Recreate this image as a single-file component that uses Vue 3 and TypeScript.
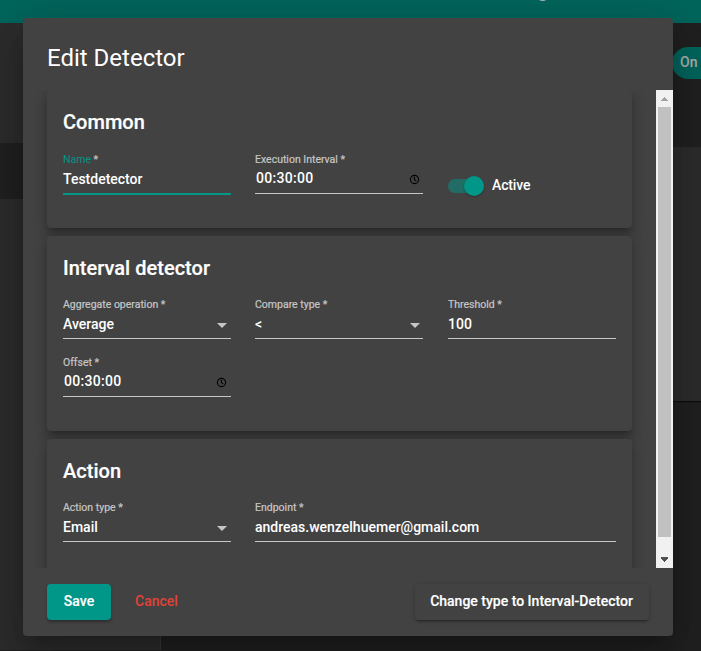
<script setup lang="ts">
import { ref } from 'vue'

interface Field {
  id: string
  label: string
  value: string
  kind: 'text' | 'time' | 'select'
  focused?: boolean
  wide?: boolean
}

interface Section {
  id: string
  title: string
  fields: Field[]
  toggle?: string
}

const sections: Section[] = [
  {
    id: 'common',
    title: 'Common',
    fields: [
      { id: 'name', label: 'Name', value: 'Testdetector', kind: 'text', focused: true },
      { id: 'execution', label: 'Execution Interval', value: '00:30:00', kind: 'time' },
    ],
    toggle: 'Active',
  },
  {
    id: 'interval',
    title: 'Interval detector',
    fields: [
      { id: 'aggregate', label: 'Aggregate operation', value: 'Average', kind: 'select' },
      { id: 'compare', label: 'Compare type', value: '<', kind: 'select' },
      { id: 'threshold', label: 'Threshold', value: '100', kind: 'text' },
      { id: 'offset', label: 'Offset', value: '00:30:00', kind: 'time' },
    ],
  },
  {
    id: 'action',
    title: 'Action',
    fields: [
      { id: 'type', label: 'Action type', value: 'Email', kind: 'select' },
      { id: 'endpoint', label: 'Endpoint', value: 'andreas.wenzelhuemer@gmail.com', kind: 'text', wide: true },
    ],
  },
]

const active = ref(true)
</script>

<template>
  <div class="screen">
    <div class="page">
      <header class="toolbar"><span class="toolbar-title">g</span></header>
      <div class="body">
        <nav class="sidenav"><div class="nav-selected"></div></nav>
        <main class="main">
          <div class="chip-row"><span class="chip">On</span></div>
          <div class="panel"></div>
        </main>
      </div>
    </div>

    <div class="backdrop">
      <div class="dialog">
        <h1 class="dialog-title">Edit Detector</h1>
        <div class="content">
          <div class="cards">
            <section v-for="s in sections" :key="s.id" class="card" :class="s.id">
              <h2 class="card-title">{{ s.title }}</h2>
              <div class="grid">
                <div
                  v-for="f in s.fields"
                  :key="f.id"
                  class="field"
                  :class="[f.kind, { focused: f.focused, wide: f.wide }]"
                >
                  <label class="label"><span class="label-text">{{ f.label }}</span> *</label>
                  <div class="control">
                    <span class="value">{{ f.value }}</span>
                    <svg v-if="f.kind === 'time'" class="clock" viewBox="0 0 11 11">
                      <circle cx="5.5" cy="5.5" r="4.1" />
                      <path d="M5.4 2.8v2.9l1.9 1.2" />
                    </svg>
                    <svg v-if="f.kind === 'select'" class="arrow" viewBox="0 0 10 5">
                      <path d="M0 0h10L5 5z" />
                    </svg>
                  </div>
                </div>
                <div v-if="s.toggle" class="toggle" @click="active = !active">
                  <span class="track" :class="{ on: active }"><span class="thumb"></span></span>
                  <span class="toggle-label">{{ s.toggle }}</span>
                </div>
              </div>
            </section>
          </div>
          <div class="scrollbar">
            <svg class="sb-btn up" viewBox="0 0 17 17"><path d="M5 11h7v-1h-1v-1h-1v-1h-1v-1h-1v1h-1v1h-1v1h-1z" /></svg>
            <div class="sb-thumb"></div>
            <svg class="sb-btn down" viewBox="0 0 17 17"><path d="M5 6h7v2h-1v1h-1v1h-1v1h-1v-1h-1v-1h-1v-1h-1z" /></svg>
          </div>
        </div>
        <div class="actions">
          <button class="btn save">Save</button>
          <button class="btn cancel">Cancel</button>
          <button class="btn change">Change type to Interval-Detector</button>
        </div>
      </div>
    </div>
  </div>
</template>

<style>
body {
  margin: 0;
  overflow: hidden;
}
</style>

<style scoped>
.screen {
  position: relative;
  width: 701px;
  height: 651px;
  overflow: hidden;
  font-family: Roboto, sans-serif;
  font-size: 14px;
  font-weight: 500;
  color: #fff;
  background: #303030;
}
.screen * {
  box-sizing: border-box;
}
.page {
  height: 650px;
  display: flex;
  flex-direction: column;
}
.toolbar {
  height: 23px;
  flex: none;
  background: #009688;
  padding-left: 537px;
  overflow: hidden;
}
.toolbar-title {
  display: block;
  font-size: 20px;
  line-height: 24px;
  margin-top: -22px;
}
.body {
  flex: 1;
  display: flex;
}
.sidenav {
  width: 161px;
  flex: none;
  background: #424242;
  border-right: 1px solid #525252;
  padding-top: 120px;
}
.nav-selected {
  height: 56px;
  background: #303030;
}
.main {
  flex: 1;
  min-width: 0;
  overflow: hidden;
  background: #303030;
}
.chip-row {
  display: flex;
  justify-content: flex-end;
  height: 124px;
  padding-top: 24px;
}
.chip {
  width: 60px;
  flex: none;
  height: 32px;
  margin-right: -31px;
  border-radius: 16px;
  background: #009688;
  padding-left: 8px;
  line-height: 31px;
}
.panel {
  height: 254px;
  background: #424242;
  box-shadow: 0 1px 1px rgba(0, 0, 0, 0.6);
}
.backdrop {
  position: absolute;
  inset: 0;
  background: rgba(0, 0, 0, 0.32);
  padding: 18px 28px 15px 23px;
}
.dialog {
  width: 650px;
  height: 618px;
  border-radius: 4px;
  background: #424242;
  padding: 24px 0 16px 24px;
  display: flex;
  flex-direction: column;
  box-shadow: 0 11px 15px -7px rgba(0, 0, 0, 0.2), 0 24px 38px 3px rgba(0, 0, 0, 0.14),
    0 9px 46px 8px rgba(0, 0, 0, 0.12);
}
.dialog-title {
  margin: 0 0 16px;
  height: 32px;
  line-height: 32px;
  font-size: 24px;
  font-weight: 400;
}
.content {
  height: 478px;
  margin-left: -24px;
  overflow: hidden;
  display: flex;
  justify-content: space-between;
}
.cards {
  width: 609px;
  padding-left: 24px;
  display: flex;
  flex-direction: column;
  gap: 8px;
}
.card {
  flex: none;
  border-radius: 4px;
  background: #424242;
  padding: 16px;
  box-shadow: 0 5px 5px -3px rgba(0, 0, 0, 0.2), 0 8px 10px 1px rgba(0, 0, 0, 0.14),
    0 3px 14px 2px rgba(0, 0, 0, 0.12);
}
.card.common {
  height: 138px;
}
.card.interval {
  height: 195px;
}
.card.action {
  height: 160px;
}
.card-title {
  margin: 0 0 13px;
  font-size: 20px;
  line-height: 32px;
  font-weight: 500;
  letter-spacing: 0.02px;
  -webkit-text-stroke: 0.2px currentColor;
}
.common .card-title {
  margin-bottom: 14px;
}
.grid {
  display: grid;
  grid-template-columns: 192px 193px 168px;
  row-gap: 16px;
}
.field {
  width: 168px;
  height: 42px;
  border-bottom: 1px solid #c6c6c6;
}
.field.wide {
  grid-column: span 2;
  width: auto;
}
.common .field.focused {
  height: 43px;
  border-bottom: 2px solid #009688;
}
.label {
  display: block;
  height: 16px;
  line-height: 16px;
  font-size: 10.5px;
  font-weight: 400;
  color: #c6c6c6;
  white-space: nowrap;
  -webkit-text-stroke: 0.2px currentColor;
}
.focused .label-text {
  color: #009688;
  -webkit-text-stroke: 0;
}
.control {
  height: 22px;
  display: flex;
  align-items: center;
  justify-content: space-between;
}
.time .control {
  height: 20px;
  padding-left: 1px;
}
.time .value {
  letter-spacing: 0.3px;
}
.clock {
  width: 11px;
  height: 11px;
  margin: 3px 4px 0 0;
  fill: none;
  stroke: #000;
  stroke-width: 1.1;
}
.arrow {
  width: 10px;
  height: 5px;
  margin: 3px 4px 0 0;
  fill: #c6c6c6;
}
.field:nth-child(2) .clock,
.field:nth-child(2) .arrow {
  margin-right: 3px;
}
.toggle {
  display: flex;
  align-items: center;
  height: 24px;
  margin-top: 21px;
}
.track {
  width: 36px;
  height: 14px;
  margin-top: 2px;
  border-radius: 7px;
  background: #6a6a6a;
  display: flex;
  align-items: center;
}
.track.on {
  background: #216d66;
  justify-content: flex-end;
}
.thumb {
  width: 20px;
  height: 20px;
  flex: none;
  border-radius: 50%;
  background: #009688;
  box-shadow: 0 1px 2px rgba(0, 0, 0, 0.3);
}
.toggle-label {
  margin-left: 8px;
  letter-spacing: -0.15px;
}
.scrollbar {
  width: 17px;
  background: #f1f1f1;
  display: flex;
  flex-direction: column;
}
.sb-btn {
  width: 17px;
  height: 17px;
  flex: none;
}
.up {
  fill: #a3a3a3;
}
.down {
  fill: #505050;
  margin-top: auto;
}
.sb-thumb {
  width: 13px;
  height: 430px;
  margin-left: 2px;
  background: #c1c1c1;
}
.actions {
  display: flex;
  padding: 16px 24px 0 0;
}
.btn {
  height: 36px;
  padding: 0 16px 2px;
  border: 0;
  border-radius: 4px;
  background: transparent;
  color: #fff;
  font: 500 14px Roboto, sans-serif;
  white-space: nowrap;
  -webkit-text-stroke: 0.15px currentColor;
}
.save {
  width: 64px;
  background: #009688;
  box-shadow: 0 2px 3px rgba(0, 0, 0, 0.32);
}
.cancel {
  margin-left: 8px;
  color: #e04238;
  -webkit-text-stroke: 0;
}
.change {
  margin-left: auto;
  width: 234px;
  padding-left: 15px;
  box-shadow: 0 3px 1px -2px rgba(0, 0, 0, 0.2), 0 2px 2px rgba(0, 0, 0, 0.14), 0 1px 5px rgba(0, 0, 0, 0.12);
}
</style>
